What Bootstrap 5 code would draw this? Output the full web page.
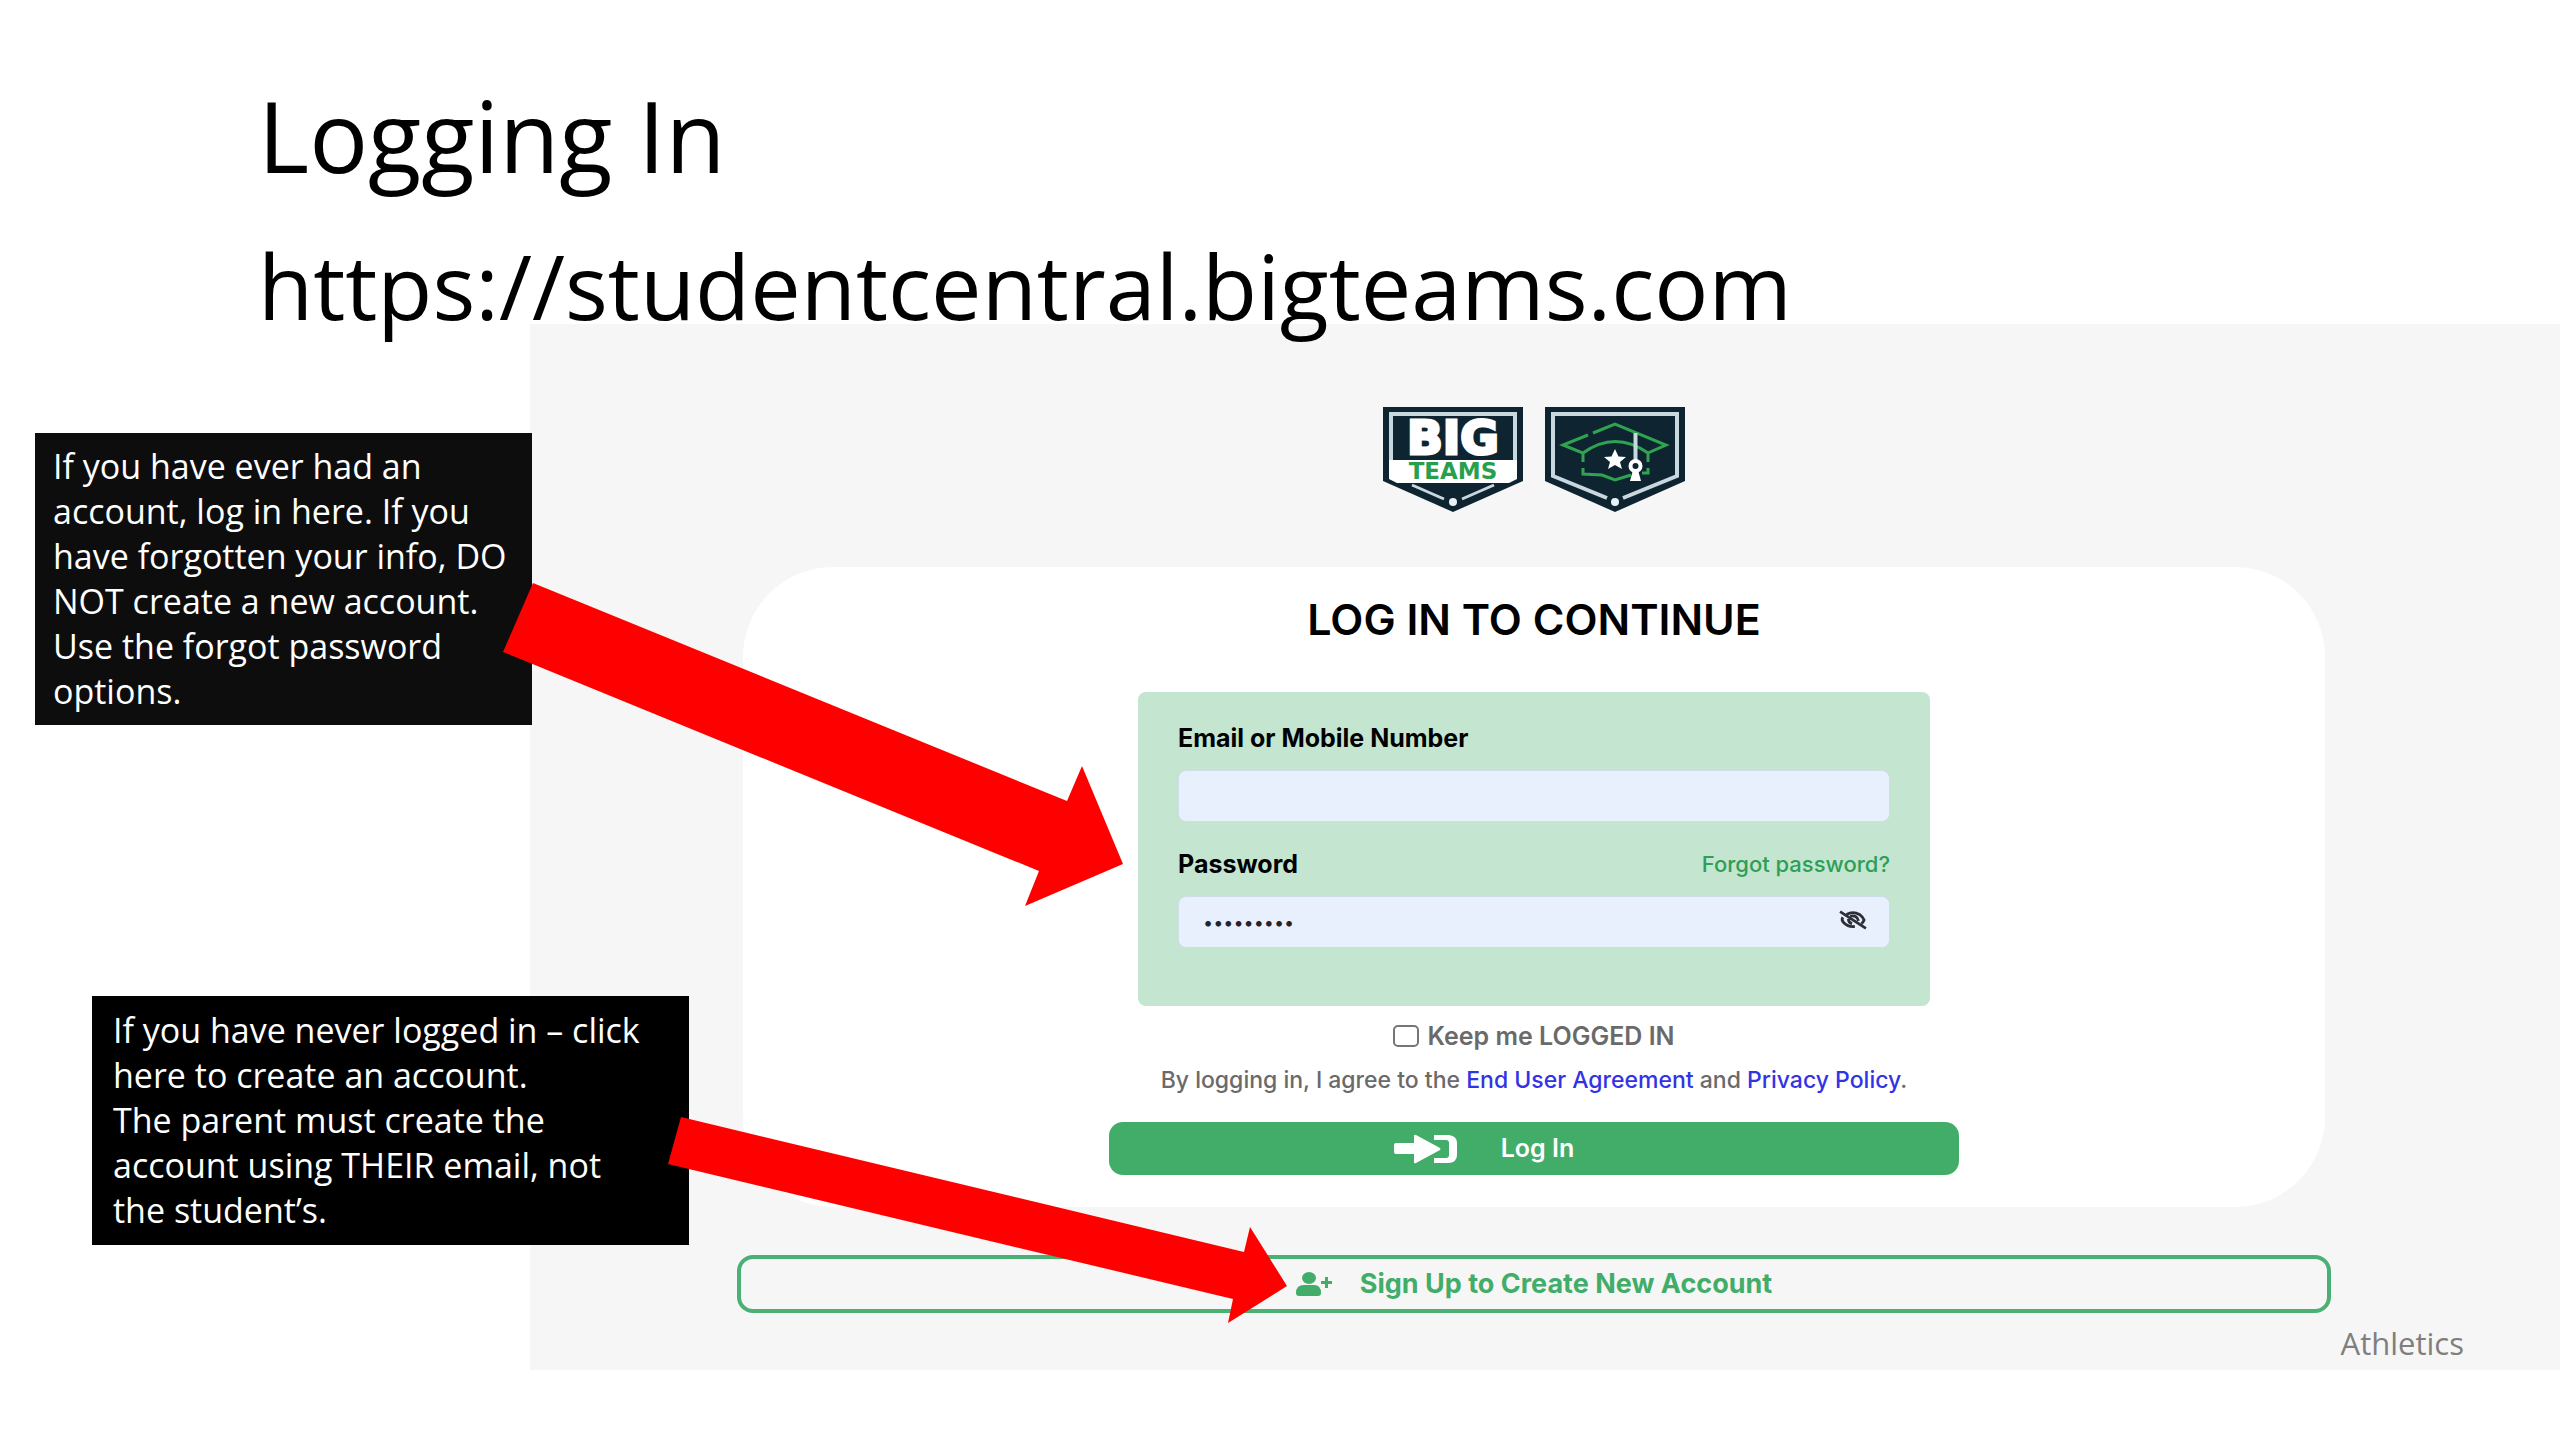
<!DOCTYPE html>
<html lang="en">
<head>
<meta charset="utf-8">
<meta name="viewport" content="width=device-width, initial-scale=1">
<title>Logging In</title>
<link href="https://cdn.jsdelivr.net/npm/bootstrap@5.3.0/dist/css/bootstrap.min.css" rel="stylesheet">
<style>
  body { font-family: "Open Sans", "Noto Sans", sans-serif; color: #000; background: #fff; }
  .slide-head { padding: 75px 24px 0 258px; }
  .slide-title { font-size: 98px; line-height: 120px; margin: 0 0 51px; font-weight: 400; }
  .slide-url { font-size: 90px; line-height: 78px; margin: 0; }
  .portal { margin-left: 530px; padding: 83px 22px 0 0; background: #f6f6f6; font-family: Inter, Roboto, sans-serif; }
  .badges { gap: 22px; margin-bottom: 55px; }
  .login-card { width: 100%; max-width: 1582px; border-radius: 90px; padding: 28px 24px 32px; background: #fff; }
  .login-title { font-size: 43px; line-height: 48px; font-weight: 600; margin: 0 0 49px; }
  .cred-box { width: 100%; max-width: 792px; padding: 31px 40px 58px; border-radius: 8px; background: #c4e5d0; }
  .cred-label { font-size: 25px; line-height: 30px; font-weight: 700; }
  .cred-row { margin-bottom: 17px; }
  .cred-row + .cred-field { margin-bottom: 27px; }
  .cred-field.last-field { margin-bottom: 0; }
  .cred-input { height: 52px; background: #e8f0fe; border: 1px solid #cfdcea; border-radius: 8px; padding: 0 64px 0 24px; font-size: 18px; }
  .cred-input:focus { background: #e8f0fe; }
  .eye-btn { right: 20px; top: 12px; width: 32px; height: 28px; }
  .forgot { font-size: 22px; line-height: 30px; font-weight: 500; color: #2f9e56; }
  .keep-row { gap: 8px; margin-top: 15px; font-size: 25px; line-height: 30px; font-weight: 600; color: #6a6a6a; }
  .keep-row .form-check-input { width: 26px; height: 22px; border: 2px solid #767676; border-radius: 5px; }
  .terms { font-size: 23px; line-height: 30px; font-weight: 500; color: #6a6a6a; margin: 14px 0 27px; }
  .terms a { color: #3333e6; }
  .login-btn { max-width: 850px; height: 53px; border-radius: 14px; background: #41ad69; color: #fff; font-size: 25px; font-weight: 600; gap: 44px; padding: 0 100px 0 0; }
  .login-btn:hover { background: #389a5c; color: #fff; }
  .signup-btn { max-width: 1594px; height: 58px; margin-top: 48px; border: 4px solid #4bb074; border-radius: 16px; color: #41ad69; font-size: 27px; font-weight: 700; gap: 28px; padding: 0; }
  .slide-foot { width: 100%; padding: 8px 74px 5px 0; font: 31px/44px "Open Sans", sans-serif; color: #7f7f7f; }
  .callout { color: #fff; font-size: 34px; line-height: 45px; padding: 11px 18px; }
  .callout-have { left: 35px; top: 433px; width: 497px; background: #0d0d0d; }
  .callout-new { left: 92px; top: 996px; width: 597px; background: #000; padding: 12px 40px 12px 21px; }
  .arrow-have { left: 503px; top: 583px; }
  .arrow-new { left: 668px; top: 1117px; }
</style>
<script src="https://cdn.jsdelivr.net/npm/bootstrap@5.3.0/dist/js/bootstrap.bundle.min.js"></script>
</head>
<body>
<main class="position-relative">
  <header class="slide-head position-relative z-1">
    <h1 class="slide-title">Logging In</h1>
    <p class="slide-url">https://studentcentral.bigteams.com</p>
  </header>

  <section class="portal d-flex flex-column align-items-center">
    <div class="badges d-flex">
      <svg width="140" height="105" viewBox="0 0 140 105" role="img" aria-label="Big Teams">
        <path d="M0 0H140V74L70 105 0 74Z" fill="#0f2431"/>
        <path d="M8 70V7H132V70" fill="none" stroke="#c9d7df" stroke-width="4"/>
        <path d="M6 53H134V72L126 76H14L6 72Z" fill="#fff"/>
        <path d="M29 78L61 92M111 78L79 92" stroke="#c9d7df" stroke-width="3"/>
        <circle cx="70" cy="95" r="4" fill="#e8f1f5"/>
        <text x="70" y="47" text-anchor="middle" font-family="DejaVu Sans" font-weight="700" font-size="47" fill="#fff" stroke="#fff" stroke-width="3">BIG</text>
        <text x="70" y="72" text-anchor="middle" font-family="DejaVu Sans" font-weight="700" font-size="23" fill="#27a04d">TEAMS</text>
      </svg>
      <svg width="140" height="105" viewBox="0 0 140 105" role="img" aria-label="Student Central">
        <path d="M0 0H140V74L70 105 0 74Z" fill="#0f2431"/>
        <path d="M62 91L8 69V7H132V69L78 91" fill="none" stroke="#c9d7df" stroke-width="4"/>
        <circle cx="70" cy="95" r="4" fill="#e8f1f5"/>
        <g fill="none" stroke="#2fa350" stroke-width="3">
          <path d="M48 26L70 17 121 38 103 46V55M43 28L18 38 38 46V55"/>
          <path d="M38 46Q70 23 103 46M38 61V67L57 68 70 73 86 68M103 61V66H97"/>
        </g>
        <path d="M70 42L73.500 49.500 81 50 75 55 77 62 70 58 63 62 65 55 59 50 66.500 49.500Z" fill="#fff"/>
        <path d="M90.500 26V54" stroke="#c9d7df" stroke-width="4"/>
        <circle cx="90.500" cy="59" r="5" fill="none" stroke="#fff" stroke-width="4"/>
        <path d="M88 63H93L96 74H85Z" fill="#fff"/>
      </svg>
    </div>

    <form class="login-card d-flex flex-column align-items-center">
      <h2 class="login-title">LOG IN TO CONTINUE</h2>
      <div class="cred-box">
        <div class="cred-row d-flex"><label class="cred-label" for="email">Email or Mobile Number</label></div>
        <div class="cred-field"><input class="form-control cred-input" id="email" type="text"></div>
        <div class="cred-row d-flex justify-content-between">
          <label class="cred-label" for="pw">Password</label>
          <a class="forgot text-decoration-none" href="#">Forgot password?</a>
        </div>
        <div class="cred-field last-field position-relative">
          <input class="form-control cred-input" id="pw" type="password" value="password1">
          <button class="eye-btn btn p-0 border-0 position-absolute d-flex" type="button" aria-label="Show password">
            <svg width="30" height="24" viewBox="0 0 32 26" fill="none" stroke="#2c3036" stroke-width="3">
              <path d="M9 7Q16 3 23 7 27 10 28 13 27 16 25 17M5 10Q3 13 6 16 11 21 18 20"/>
              <path d="M13 9Q20 7 22 14M11 12Q11 16 15 17M2 4L30 22"/>
            </svg>
          </button>
        </div>
      </div>
      <div class="keep-row d-flex align-items-center">
        <input class="form-check-input m-0" type="checkbox" id="keep">
        <label for="keep">Keep me LOGGED IN</label>
      </div>
      <p class="terms">By logging in, I agree to the <a class="text-decoration-none" href="#">End User Agreement</a> and <a class="text-decoration-none" href="#">Privacy Policy</a>.</p>
      <button class="login-btn btn w-100 border-0 d-flex align-items-center justify-content-center" type="submit">
        <svg width="63" height="30" viewBox="0 0 63 30" fill="#fff">
          <path d="M2 9H20V2Q20 0 22 1L46 14Q47 15 46 16L22 29Q20 30 20 28V20H2Q0 20 0 18V11Q0 9 2 9Z"/>
          <path d="M40 1H55Q63 2 63 9V21Q63 28 55 29H40V24H52Q55 24 55 21V9Q55 6 52 6H40Z"/>
        </svg>
        Log In
      </button>
    </form>

    <button class="signup-btn btn w-100 d-flex align-items-center justify-content-center" type="button">
      <svg width="36" height="24" viewBox="0 0 36 24" fill="#41ad69">
        <ellipse cx="13" cy="6" rx="7" ry="6"/>
        <path d="M0 21Q0 13 8 13H18Q25 13 25 21 25 24 22 24H3Q0 24 0 21Z"/>
        <path d="M29 5H32V9H36V12H32V16H29V12H25V9H29Z"/>
      </svg>
      Sign Up to Create New Account
    </button>
    <footer class="slide-foot text-end">Athletics</footer>
  </section>

  <aside class="callout callout-have position-absolute z-1">If you have ever had an account, log in here. If you have forgotten your info, DO NOT create a new account. Use the forgot password options.</aside>
  <aside class="callout callout-new position-absolute z-1">If you have never logged in – click here to create an account.<br>The parent must create the account using THEIR email, not the student’s.</aside>
  <svg class="arrow-have position-absolute z-2" width="620" height="323" viewBox="0 0 620 323" fill="#f00" aria-hidden="true"><path d="M30 0L564 218 579 183 620 281 522 323 536 288 0 69Z"/></svg>
  <svg class="arrow-new position-absolute z-2" width="619" height="206" viewBox="0 0 619 206" fill="#f00" aria-hidden="true"><path d="M13 0L576 135 582 110 619 169 560 206 565 182 0 47Z"/></svg>
</main>
</body>
</html>
